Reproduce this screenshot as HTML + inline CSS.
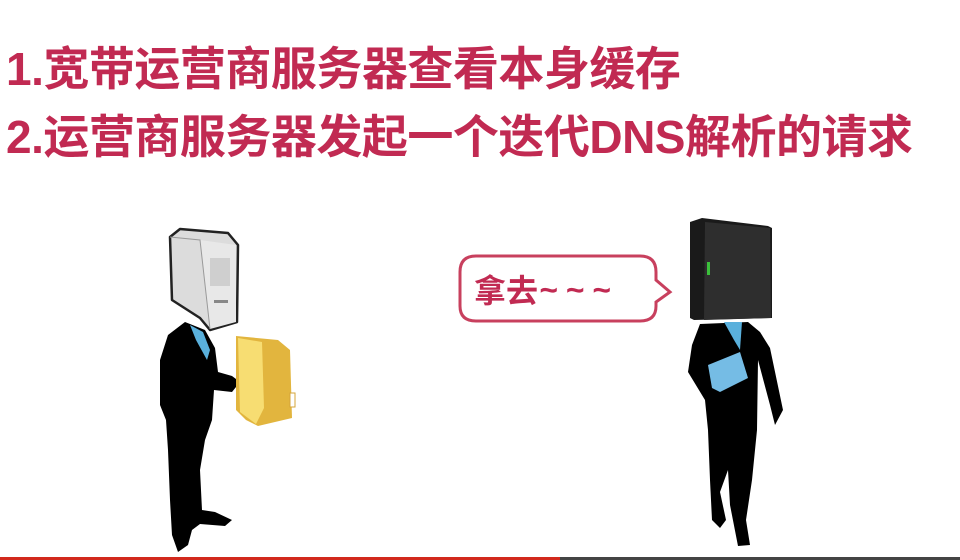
<!DOCTYPE html>
<html><head><meta charset="utf-8"><style>
html,body{margin:0;padding:0;background:#fff;}
body{width:960px;height:560px;position:relative;overflow:hidden;font-family:"Liberation Sans","Noto Sans CJK SC",sans-serif;}
.t{position:absolute;left:6px;color:#c12a52;font-size:46px;font-weight:bold;white-space:nowrap;letter-spacing:-0.5px;}
</style></head><body>
<div class="t" style="top:33px">1.宽带运营商服务器查看本身缓存</div>
<div class="t" style="top:101px">2.运营商服务器发起一个迭代DNS解析的请求</div>
<svg width="960" height="560" style="position:absolute;left:0;top:0">
<path d="M476 256 H640 Q656 256 656 272 V280 L670 292 L656 302 V306 Q656 321 640 321 H476 Q460 321 460 306 V272 Q460 256 476 256 Z" fill="#fff" stroke="#c8405e" stroke-width="3"/>
<text x="474" y="302" font-size="32" fill="#c12a52" font-weight="bold" font-family="Liberation Sans,Noto Sans CJK SC,sans-serif">拿去</text>
<text x="540" y="300" font-size="30" fill="#c12a52" stroke="#c12a52" stroke-width="1.2" font-family="Liberation Sans,sans-serif" letter-spacing="9">~~~</text>
<path d="M185 322 L205 330 L215 348 L218 372 L232 376 L240 382 L232 392 L214 390 L212 420 L205 440 L200 470 L202 510 L215 512 L232 520 L225 526 L200 524 L192 530 L188 545 L178 552 L172 535 L170 500 L168 450 L166 420 L160 405 L160 360 L168 335 Z" fill="#000"/>
<path d="M190 325 L203 332 L210 350 L207 360 L196 340 Z" fill="#5ab0dc"/>
<path d="M170 237 L180 229 L228 233 L238 245 L237 322 L210 330 L200 318 L172 300 Z" fill="#dcdcdc" stroke="#222" stroke-width="2.5" stroke-linejoin="round"/>
<path d="M200 240 L236 245 L236 322 L210 329 Z" fill="#e8e8e8"/>
<path d="M170 237 L200 240 L210 329" fill="none" stroke="#999" stroke-width="1"/>
<rect x="210" y="258" width="20" height="28" fill="#cfcfcf"/>
<rect x="214" y="300" width="14" height="3" fill="#888"/>
<path d="M236 336 L278 340 L290 350 L292 418 L258 426 L246 420 L236 410 Z" fill="#e2b53e"/>
<path d="M238 338 L262 342 L264 408 L256 424 L240 412 Z" fill="#f7dd72"/>
<rect x="290" y="393" width="5" height="14" fill="#fff" stroke="#d4a43a"/>
<path d="M690 222 L702 218 L768 226 L772 228 L772 318 L694 320 L690 318 Z" fill="#1a1a1a"/>
<path d="M705 222 L770 228 L771 318 L704 320 Z" fill="#2e2e2e"/>
<rect x="707" y="262" width="3" height="13" fill="#3bbf3b"/>
<path d="M700 324 L748 322 L760 332 L770 348 L783 410 L775 425 L770 405 L758 360 L757 430 L752 480 L746 520 L750 545 L738 546 L730 505 L728 470 L720 492 L726 520 L720 528 L712 520 L710 480 L708 430 L705 400 L688 372 L692 345 Z" fill="#000"/>
<path d="M724 322 L742 322 L740 350 L734 340 Z" fill="#5ab0dc"/>
<path d="M708 365 L740 352 L748 378 L720 392 L712 388 Z" fill="#75bce5"/>
<rect x="0" y="557" width="560" height="3" fill="#d2291d"/>
<rect x="560" y="557" width="400" height="3" fill="#444"/>
</svg>
</body></html>
